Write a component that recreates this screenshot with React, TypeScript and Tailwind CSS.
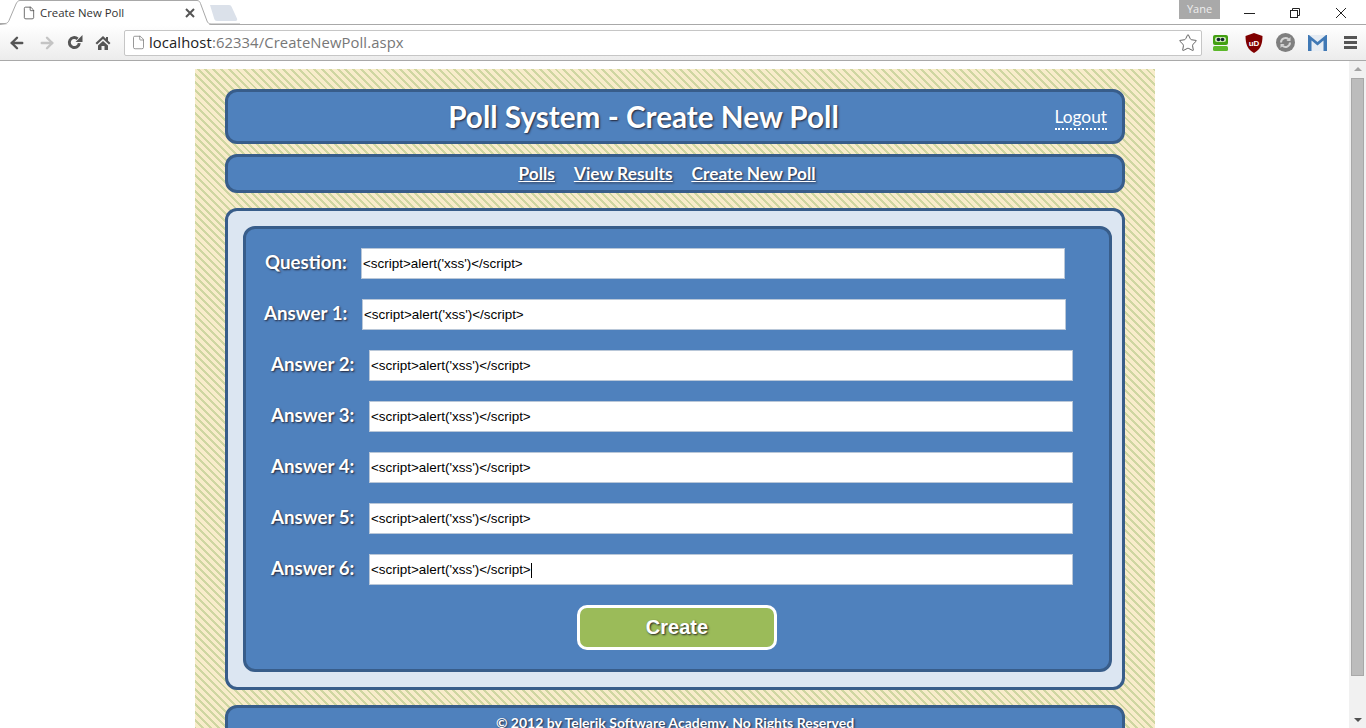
import React from 'react'
import { ArrowLeft, ArrowRight, File, Star } from 'lucide-react'

const XSS = "<script>alert('xss')</script>"

const fields = [
  { label: 'Question:', indent: 'pl-[19px]', labelWidth: 'w-[96px]' },
  { label: 'Answer 1:', indent: 'pl-[18px]', labelWidth: 'w-[98px]' },
  { label: 'Answer 2:', indent: 'pl-[25px]', labelWidth: 'w-[98px]' },
  { label: 'Answer 3:', indent: 'pl-[25px]', labelWidth: 'w-[98px]' },
  { label: 'Answer 4:', indent: 'pl-[25px]', labelWidth: 'w-[98px]' },
  { label: 'Answer 5:', indent: 'pl-[25px]', labelWidth: 'w-[98px]' },
  { label: 'Answer 6:', indent: 'pl-[25px]', labelWidth: 'w-[98px]' },
]

function Panel({ className, children }: { className: string; children?: React.ReactNode }) {
  return (
    <div className={`mx-[30px] rounded-[12px] border-[3px] border-[#385d8a] bg-[#4f81bd] text-white ${className}`}>
      {children}
    </div>
  )
}

function Field({ label, indent, labelWidth, caret }: { label: string; indent: string; labelWidth: string; caret?: boolean }) {
  return (
    <div className={`flex h-[31px] items-center ${indent}`}>
      <span className={`${labelWidth} pb-[3px] whitespace-nowrap font-['Lato',sans-serif] text-[18.7px] font-bold [text-shadow:1px_1px_2px_#223]`}>
        {label}
      </span>
      <div className="flex h-[31px] w-[704px] items-center border border-[#b9c7d8] bg-white pl-[1px] pt-[1px] font-['Liberation_Sans',sans-serif] text-[13.45px] text-black">
        {XSS}
        {caret && <span className="h-[15px] w-px bg-black" />}
      </div>
    </div>
  )
}

function ChromeBar() {
  return (
    <div className="h-[61px] border-b border-[#a9a9a9] bg-white font-['Open_Sans',sans-serif]">
      {/* tab strip */}
      <div className="relative flex h-[25px] items-start border-b border-[#a8a8a8] bg-white">
        <svg className="absolute left-0 top-0" width="240" height="25" viewBox="0 0 240 25" fill="none">
          <path d="M210 5H229c1.500 0 2.200.8 2.700 2L237 18.500c.6 1.500 0 2.500-1.500 2.500H217c-1.500 0-2.200-.8-2.700-2z" fill="#dbe1ea" />
          <path d="M0 24H5c2 0 3-1 4-3L16 4c1-2 2-3.500 4-3.500H197c2 0 3 1.500 3.500 3L207 21c1 2 2 4 4 4H8z" fill="#fff" />
          <path d="M0 23.500H5c2 0 3-1 4-3L16 4c1-2 2-3.500 4-3.500H197c2 0 3 1.500 3.500 3L207 21c.7 1.800 2 3 4 3h29" stroke="#a8a8a8" />
        </svg>
        <div className="relative ml-[22px] flex h-[25px] w-[176px] items-center pr-[2px] text-[11.4px] text-[#333]">
          <File size={14} strokeWidth={1.3} className="text-[#444]" />
          <span className="ml-[4px] flex-1">Create New Poll</span>
          <svg width="12" height="12" viewBox="0 0 12 12" stroke="#555" strokeWidth="2"><path d="M2 2l8 8M10 2l-8 8" /></svg>
        </div>
        <div className="flex-1" />
        <div className="flex h-[19px] w-[41px] items-center justify-center bg-[#a9a9a9] text-[11px] text-[#eee]">Yane</div>
        <div className="flex h-[26px] w-[146px] items-center pl-[24px]">
          <div className="h-px w-[11px] bg-[#222]" />
          <svg className="ml-[35px]" width="10" height="10" viewBox="0 0 10 10" fill="none" stroke="#222"><rect x="0.5" y="2.5" width="7" height="7" /><path d="M2.500 2V.5h7v7H8" /></svg>
          <svg className="ml-[36px]" width="10" height="10" viewBox="0 0 10 10" fill="none" stroke="#222"><path d="M0 0l10 10M10 0L0 10" /></svg>
        </div>
      </div>
      {/* toolbar */}
      <div className="flex h-[35px] items-center bg-gradient-to-b from-white to-[#ececec]">
        <div className="flex w-[124px] items-center pl-[8px] text-[#555]">
          <ArrowLeft size={18} strokeWidth={3.2} />
          <ArrowRight size={18} strokeWidth={3.2} className="ml-[12px] text-[#c4c4c4]" />
          <svg className="ml-[10px]" width="17" height="17" viewBox="0 0 16 16" fill="none"><path d="M12.500 8.500a4.700 4.700 0 1 1-1.600-4" stroke="#555" strokeWidth="2.800" /><path d="M15.500 1v6.500H9z" fill="#555" /></svg>
          <svg className="ml-[12px]" width="16" height="16" viewBox="0 0 16 16" fill="#555"><path d="M8 1L.5 8 2 9.500 8 4l6 5.500L15.500 8 13 5.700V2h-2v1.800z" /><path d="M3 10.500L8 6l5 4.500V15H9.500v-4h-3v4H3z" /></svg>
        </div>
        <div className="flex h-[26px] w-[1078px] items-center rounded-[2px] border border-[#c6c6c6] bg-white pl-[6px] pr-[3px] text-[14.8px] tracking-[0.1px]">
          <File size={15} strokeWidth={1.2} className="text-[#777]" />
          <span className="ml-[3px] flex-1 text-[#777]">
            <span className="text-[#222]">localhost</span>:62334/CreateNewPoll.aspx
          </span>
          <Star size={20} strokeWidth={1.2} className="text-[#666]" />
        </div>
        {/* extension icons */}
        <div className="ml-[11px] flex items-center">
          <svg width="15" height="16" viewBox="0 0 15 16"><rect y="0" width="15" height="10" rx="2" fill="#43a012" /><rect y="11" width="15" height="5" rx="1.5" fill="#5cb82a" /><rect x="2" y="2" width="11" height="5" rx="2" fill="#cde8b5" /><circle cx="5.500" cy="4.500" r="1.800" fill="#123" /><circle cx="9.500" cy="4.500" r="1.800" fill="#123" /></svg>
          <svg className="ml-[17px]" width="18" height="20" viewBox="0 0 18 20"><path d="M9 0l8.500 3c0 8-2 13.500-8.500 17C2.500 16.500.5 11 .5 3z" fill="#800000" /><text x="9" y="12.500" fontSize="8" fontWeight="700" fill="#fff" textAnchor="middle" fontFamily="Liberation Sans">uD</text></svg>
          <svg className="ml-[13px]" width="19" height="19" viewBox="0 0 19 19"><circle cx="9.500" cy="9.500" r="9.500" fill="#7f7f7f" /><path d="M5 9.500a4.500 4.500 0 0 1 7.500-3.300M14 9.500a4.500 4.500 0 0 1-7.500 3.300" fill="none" stroke="#d5d5d5" strokeWidth="2" /><path d="M14.500 4v4h-4zM4.500 15v-4h4z" fill="#d5d5d5" /></svg>
          <svg className="ml-[13px]" width="19" height="16" viewBox="0 0 19 16"><rect width="19" height="16" fill="#3f78b5" /><path d="M1 0h17L9.500 7z" fill="#e6ecf3" /><path d="M3.500 16V5.500l6 5 6-5V16z" fill="#e6ecf3" /></svg>
          <div className="ml-[17px] flex w-[13px] flex-col gap-[2px]">
            <span className="h-[3px] bg-[#555]" />
            <span className="h-[3px] bg-[#555]" />
            <span className="h-[3px] bg-[#555]" />
          </div>
        </div>
      </div>
    </div>
  )
}

export default function App() {
  return (
    <div className="flex h-[728px] flex-col overflow-hidden bg-white">
      <ChromeBar />
      <div className="flex min-h-0 flex-1">
        <div className="min-w-0 flex-1 overflow-hidden pt-2">
          <div className="ml-[195px] w-[960px] bg-[repeating-linear-gradient(45deg,#f8ecca_0px,#f8ecca_3.5px,#cfd6a1_3.5px,#cfd6a1_5.5px)] pt-5 font-['Lato',sans-serif]">
            <Panel className="relative flex h-[55px] items-center justify-center pr-[63px] pt-[2px]">
              <h1 className="text-[29.7px] font-bold [text-shadow:1px_1px_2px_#223]">Poll System - Create New Poll</h1>
              <a className="absolute right-[15px] top-[13px] border-b-2 border-dotted border-white text-[17.3px] leading-[23px]">Logout</a>
            </Panel>
            <Panel className="mt-[10px] flex h-[39px] items-center justify-center gap-[19px] pr-[16px] text-[17.3px] font-bold underline [text-shadow:1px_1px_2px_#223]">
              <a>Polls</a>
              <a>View Results</a>
              <a>Create New Poll</a>
            </Panel>
            <div className="mx-[30px] mt-[15px] h-[482px] rounded-[12px] border-[3px] border-[#385d8a] bg-[#dce6f2] p-[15px]">
              <div className="h-[446px] w-[869px] rounded-[12px] border-[3px] border-[#385d8a] bg-[#4f81bd] pt-[19px] text-white">
                <div className="flex flex-col gap-[20px]">
                  {fields.map((f, i) => (
                    <Field key={f.label} label={f.label} indent={f.indent} labelWidth={f.labelWidth} caret={i === 6} />
                  ))}
                </div>
                <div className="mt-[20px] flex justify-center pr-[1px]">
                  <button className="h-[45px] w-[200px] rounded-[10px] border-[3px] border-white bg-[#9bbb59] pb-[2px] font-['Liberation_Sans',sans-serif] text-[20px] font-bold text-white [text-shadow:1px_1px_2px_#222]">
                    Create
                  </button>
                </div>
              </div>
            </div>
            <Panel className="mt-[15px] h-[60px] pt-[4px] text-center text-[14px] font-bold [text-shadow:1px_1px_2px_#223]">
              © 2012 by Telerik Software Academy, No Rights Reserved
            </Panel>
          </div>
        </div>
        {/* scrollbar */}
        <div className="flex w-[17px] flex-col items-center bg-[#f1f1f1]">
          <div className="mt-[6px] h-0 w-0 border-x-[4px] border-b-[4px] border-x-transparent border-b-[#a3a3a3]" />
          <div className="mt-[7px] h-[598px] w-[13px] border border-[#a8a8a8] bg-[#bcbcbc]" />
          <div className="mt-auto mb-[6px] h-0 w-0 border-x-[4px] border-t-[4px] border-x-transparent border-t-[#505050]" />
        </div>
      </div>
    </div>
  )
}
